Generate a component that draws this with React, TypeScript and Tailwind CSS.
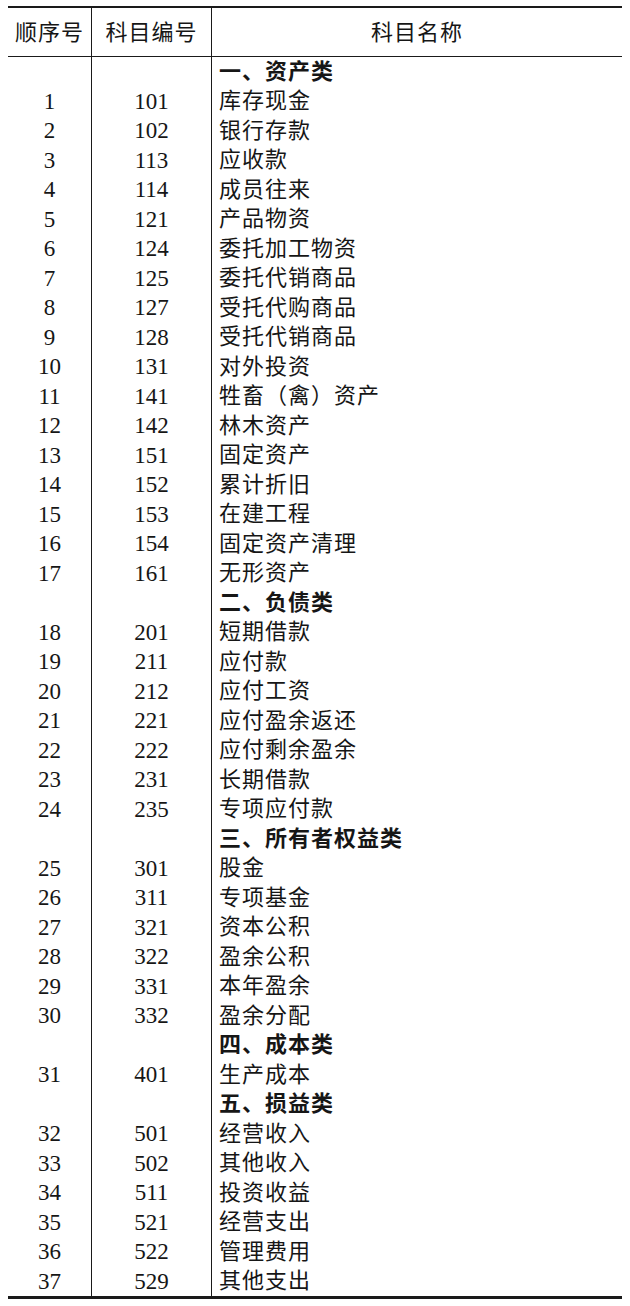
type Row = { no?: number; code?: number; name: string; group?: boolean };

const rows: Row[] = [
  { name: "一、资产类", group: true },
  { no: 1, code: 101, name: "库存现金" },
  { no: 2, code: 102, name: "银行存款" },
  { no: 3, code: 113, name: "应收款" },
  { no: 4, code: 114, name: "成员往来" },
  { no: 5, code: 121, name: "产品物资" },
  { no: 6, code: 124, name: "委托加工物资" },
  { no: 7, code: 125, name: "委托代销商品" },
  { no: 8, code: 127, name: "受托代购商品" },
  { no: 9, code: 128, name: "受托代销商品" },
  { no: 10, code: 131, name: "对外投资" },
  { no: 11, code: 141, name: "牲畜（禽）资产" },
  { no: 12, code: 142, name: "林木资产" },
  { no: 13, code: 151, name: "固定资产" },
  { no: 14, code: 152, name: "累计折旧" },
  { no: 15, code: 153, name: "在建工程" },
  { no: 16, code: 154, name: "固定资产清理" },
  { no: 17, code: 161, name: "无形资产" },
  { name: "二、负债类", group: true },
  { no: 18, code: 201, name: "短期借款" },
  { no: 19, code: 211, name: "应付款" },
  { no: 20, code: 212, name: "应付工资" },
  { no: 21, code: 221, name: "应付盈余返还" },
  { no: 22, code: 222, name: "应付剩余盈余" },
  { no: 23, code: 231, name: "长期借款" },
  { no: 24, code: 235, name: "专项应付款" },
  { name: "三、所有者权益类", group: true },
  { no: 25, code: 301, name: "股金" },
  { no: 26, code: 311, name: "专项基金" },
  { no: 27, code: 321, name: "资本公积" },
  { no: 28, code: 322, name: "盈余公积" },
  { no: 29, code: 331, name: "本年盈余" },
  { no: 30, code: 332, name: "盈余分配" },
  { name: "四、成本类", group: true },
  { no: 31, code: 401, name: "生产成本" },
  { name: "五、损益类", group: true },
  { no: 32, code: 501, name: "经营收入" },
  { no: 33, code: 502, name: "其他收入" },
  { no: 34, code: 511, name: "投资收益" },
  { no: 35, code: 521, name: "经营支出" },
  { no: 36, code: 522, name: "管理费用" },
  { no: 37, code: 529, name: "其他支出" },
];

export default function App() {
  return (
    <div
      className="w-[630px] h-[1306px] bg-white text-[#161616] pt-[6px] pl-[8px]"
      style={{ fontFamily: "'Liberation Serif', 'Noto Sans CJK SC', serif" }}
    >
      <div className="w-[614px] border-t-2 border-b-[3px] border-[#1a1a1a]">
        {/* header */}
        <div className="grid grid-cols-[84px_120px_1fr] h-[49px] border-b border-[#1a1a1a] text-[22px] tracking-[1px]">
          <div className="flex items-center justify-center border-r border-[#1a1a1a]">顺序号</div>
          <div className="flex items-center justify-center border-r border-[#1a1a1a]">科目编号</div>
          <div className="flex items-center justify-center">科目名称</div>
        </div>

        {rows.map((r, i) => (
          <div key={i} className="grid grid-cols-[84px_120px_1fr] h-[29.5px] leading-none">
            <div className="flex items-center justify-center border-r border-[#1a1a1a] text-[23px]">
              {r.no ?? ""}
            </div>
            <div className="flex items-center justify-center border-r border-[#1a1a1a] text-[23px]">
              {r.code ?? ""}
            </div>
            <div
              className={
                "flex items-center pl-[7px] text-[22px] tracking-[1px] " +
                (r.group ? "font-bold" : "")
              }
            >
              {r.name}
            </div>
          </div>
        ))}
      </div>
    </div>
  );
}
